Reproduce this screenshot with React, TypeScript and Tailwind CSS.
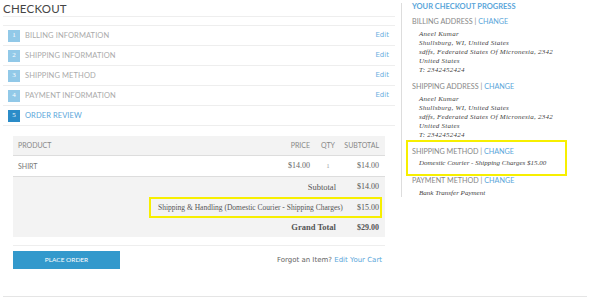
import React from "react";

const steps = [
  { n: 1, label: "BILLING INFORMATION", edit: true },
  { n: 2, label: "SHIPPING INFORMATION", edit: true },
  { n: 3, label: "SHIPPING METHOD", edit: true },
  { n: 4, label: "PAYMENT INFORMATION", edit: true },
  { n: 5, label: "ORDER REVIEW", edit: false },
];

const address = [
  "Aneel Kumar",
  "Shullsburg, WI, United States",
  "sdffs, Federated States Of Micronesia, 2342",
  "United States",
  "T: 2342452424",
];

const heading = "font-['Lato',sans-serif] text-[7.2px] leading-[10px] text-[#888] uppercase";
const serif = "font-['Liberation_Serif',serif]";

function SideHead({ title }: { title: string }) {
  return (
    <div className={heading}>
      {title} | <span className="text-[#5aa6da]">Change</span>
    </div>
  );
}

function Address({ className = "" }: { className?: string }) {
  return (
    <div className={`${serif} italic text-[7px] tracking-[0.25px] leading-[9px] text-[#444] pl-[7px] ${className}`}>
      {address.map((line) => (
        <div key={line}>{line}</div>
      ))}
    </div>
  );
}

export default function App() {
  return (
    <div className="w-[590px] h-[300px] bg-white overflow-hidden relative">
      <div className="flex">
        {/* main column */}
        <div className="w-[392px] ml-[3px]">
          <h1 className="h-[17px] border-b border-[#eee] font-['Lato',sans-serif] text-[11.5px] leading-[17px] text-[#444] tracking-[0.2px]">
            CHECKOUT
          </h1>

          <ul className="mt-[8px] border-t border-[#eee]">
            {steps.map((s) => (
              <li key={s.n} className="h-[20px] border-b border-[#eee] flex items-center pl-[5px] pr-[6px]">
                <span
                  className={`w-[12px] h-[12px] flex items-center justify-center text-white text-[7px] ${serif} ${
                    s.edit ? "bg-[#92c9e8]" : "bg-[#2b8cc8]"
                  }`}
                >
                  {s.n}
                </span>
                <span
                  className={`ml-[5px] font-['Lato',sans-serif] text-[7.5px] tracking-[0.1px] ${
                    s.edit ? "text-[#aaa]" : "text-[#5aa6da]"
                  }`}
                >
                  {s.label}
                </span>
                {s.edit && (
                  <span className="ml-auto font-['DejaVu_Sans',sans-serif] text-[7px] text-[#6aaee0]">Edit</span>
                )}
              </li>
            ))}
          </ul>

          {/* order table */}
          <div className="mt-[10px] mx-[10px]">
            <div className="h-[20px] bg-[#f3f3f3] border-b border-[#ddd] flex items-center font-['Lato',sans-serif] text-[7px] text-[#888]">
              <span className="flex-1 pl-[5px]">PRODUCT</span>
              <span className="w-[40px] text-right">PRICE</span>
              <span className="w-[28px] ml-[4px] text-center">QTY</span>
              <span className="w-[43px] pr-[6px] text-right">SUBTOTAL</span>
            </div>
            <div className="h-[21px] border-b border-[#ddd] flex items-center text-[#666]">
              <span className="flex-1 pl-[5px] font-['Lato',sans-serif] text-[7px] text-[#777]">SHIRT</span>
              <span className={`w-[40px] text-right ${serif} text-[8px]`}>$14.00</span>
              <span className={`w-[28px] ml-[4px] text-center ${serif} text-[6px] text-[#999]`}>1</span>
              <span className={`w-[43px] pr-[6px] text-right ${serif} text-[8px]`}>$14.00</span>
            </div>
            <div className={`bg-[#f3f3f3] h-[60px] ${serif} text-[#555] whitespace-nowrap`}>
              <div className="h-[20px] flex items-center text-[8.5px]">
                <span className="flex-1 text-right">Subtotal</span>
                <span className="w-[49px] pr-[6px] text-right text-[8px]">$14.00</span>
              </div>
              <div className="h-[21px] flex justify-end">
                <div className="w-[233px] mr-[3px] border-2 border-[#f7ef00] flex items-center pl-[7px]">
                  <span className="flex-1 text-right text-[7.5px]">Shipping &amp; Handling (Domestic Courier - Shipping Charges)</span>
                  <span className="w-[44px] pr-[1px] text-right text-[8px]">$15.00</span>
                </div>
              </div>
              <div className="h-[19px] flex items-center font-bold text-[8.5px]">
                <span className="flex-1 text-right">Grand Total</span>
                <span className="w-[49px] pr-[6px] text-right text-[8px]">$29.00</span>
              </div>
            </div>

            <div className="mt-[8px] border-t border-[#eee] pt-[5px] flex items-center justify-between">
              <button className="w-[107px] h-[18px] bg-[#3399cc] text-white font-['Lato',sans-serif] text-[6.5px]">
                PLACE ORDER
              </button>
              <span className="font-['DejaVu_Sans',sans-serif] text-[7px] text-[#666] pr-[3px]">
                Forgot an Item? <span className="text-[#5aa6da]">Edit Your Cart</span>
              </span>
            </div>
          </div>
        </div>

        {/* sidebar */}
        <div className="ml-[6px] mt-[3px] h-[194px] flex-1 border-l border-[#ddd] pl-[10px]">
          <div className="font-['Lato',sans-serif] text-[7.5px] leading-[8px] font-bold text-[#5aa6da]">
            YOUR CHECKOUT PROGRESS
          </div>
          <div className="mt-[6px]">
            <SideHead title="Billing Address" />
          </div>
          <Address className="mt-[3px]" />
          <div className="mt-[7px]">
            <SideHead title="Shipping Address" />
          </div>
          <Address className="mt-[3px]" />
          <div className="-ml-[6px] w-[161px] h-[36px] border-2 border-[#f7ef00] pl-[4px] pt-[5px]">
            <SideHead title="Shipping Method" />
            <div className={`${serif} italic text-[7px] leading-[9px] text-[#444] pl-[7px] mt-[2px]`}>
              Domestic Courier - Shipping Charges $15.00
            </div>
          </div>
          <div>
            <SideHead title="Payment Method" />
          </div>
          <div className={`${serif} italic text-[7px] leading-[9px] text-[#444] pl-[7px] mt-[3px]`}>
            Bank Transfer Payment
          </div>
        </div>
      </div>

      <div className="absolute left-[3px] right-[3px] top-[296px] border-t border-[#e5e5e5]" />
    </div>
  );
}
